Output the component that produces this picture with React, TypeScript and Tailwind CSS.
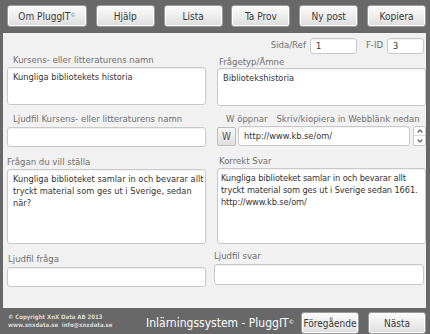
import { ChevronDown, ChevronUp } from "lucide-react";

const font = "font-['DejaVu_Sans_Condensed','DejaVu_Sans',sans-serif]";

const topButtons = ["Hjälp", "Lista", "Ta Prov", "Ny post", "Kopiera"];

function BarButton({ children, className = "" }: { children: React.ReactNode; className?: string }) {
  return (
    <button
      type="button"
      className={`flex h-[22px] items-center justify-center rounded-[3px] border border-[#9a9a9a] bg-[linear-gradient(180deg,#fbfbfb_0%,#ececec_55%,#dcdcdc_100%)] text-[10px] text-[#3a3a3a] shadow-[inset_0_0_0_1px_#ffffff] ${className}`}
    >
      {children}
    </button>
  );
}

function Label({ children, className = "" }: { children: React.ReactNode; className?: string }) {
  return <p className={`whitespace-nowrap text-[9.5px] leading-[12px] text-[#707070] ${className}`}>{children}</p>;
}

function Box({ className = "", children }: { className?: string; children?: React.ReactNode }) {
  return (
    <div
      className={`rounded-[3px] border border-[#c9c9c9] bg-white pl-[5px] pr-[1px] text-[9.2px] leading-[12px] text-[#333] shadow-[inset_0_1px_1px_rgba(0,0,0,0.06)] ${className}`}
    >
      {children}
    </div>
  );
}

export default function App() {
  return (
    <div className={`flex h-[334px] w-[430px] flex-col overflow-hidden bg-[#686868] ${font}`}>
      <div className="flex h-[33px] shrink-0 items-start justify-between pl-[7px] pr-[4px] pt-[5px]">
        <BarButton className="w-[80px]">
          <span>
            Om PluggIT<sup className="text-[6px] text-[#5b7fa8]">©</sup>
          </span>
        </BarButton>
        {topButtons.map((b) => (
          <BarButton key={b} className="w-[59px]">
            {b}
          </BarButton>
        ))}
      </div>

      <div className="ml-[3px] mr-[4px] flex-1 bg-[#f1f1f1] pl-[4px] pr-[1px]">
        <div className="flex h-[21px] items-end justify-end gap-[4px] pr-[1px]">
          <span className="pb-[2px] text-[9.5px] text-[#707070]">Sida/Ref</span>
          <Box className="h-[16px] w-[47px] !leading-[14px]">1</Box>
          <span className="ml-[5px] pb-[2px] text-[9.5px] text-[#707070]">F-ID</span>
          <Box className="h-[16px] w-[37px] !leading-[14px]">3</Box>
        </div>

        <div className="grid grid-cols-[199px_209px] gap-x-[11px]">
          <div className="flex flex-col">
            <Label className="ml-[6px]">Kursens- eller litteraturens namn</Label>
            <Box className="mt-[1px] h-[38px] pt-[3px]">Kungliga bibliotekets historia</Box>
            <Label className="ml-[6px] mt-[8px]">Ljudfil Kursens- eller litteraturens namn</Label>
            <Box className="mt-[2px] h-[20px]" />
            <Label className="mt-[9px]">Frågan du vill ställa</Label>
            <Box className="mt-[1px] h-[75px] pt-[3px]">
              Kungliga biblioteket samlar in och bevarar allt tryckt material som ges ut i Sverige, sedan när?
            </Box>
            <Label className="ml-[1px] mt-[9px]">Ljudfil fråga</Label>
            <Box className="mt-[2px] h-[20px]" />
          </div>

          <div className="flex flex-col">
            <Label className="ml-[2px] mt-[2px]">Frågetyp/Ämne</Label>
            <Box className="h-[38px] pt-[3px]">Bibliotekshistoria</Box>
            <div className="ml-[9px] mt-[7px] flex gap-[9px]">
              <Label>W öppnar</Label>
              <Label>Skriv/kiopiera in Webblänk nedan</Label>
            </div>
            <div className="mt-[1px] flex items-start gap-[2px]">
              <button
                type="button"
                className="mt-[1px] flex h-[19px] w-[19px] items-center justify-center rounded-[2px] border border-[#bdbdbd] bg-[linear-gradient(180deg,#f6f6f6,#dedede)] text-[10px] text-[#555]"
              >
                W
              </button>
              <Box className="h-[20px] w-[172px] !leading-[18px]">http://www.kb.se/om/</Box>
              <div className="ml-[1px] flex h-[20px] w-[13px] flex-col overflow-hidden rounded-[2px] border border-[#c9c9c9] bg-white">
                <div className="flex h-1/2 items-center justify-center border-b border-[#dcdcdc]">
                  <ChevronUp size={8} strokeWidth={4} color="#666" />
                </div>
                <div className="flex h-1/2 items-center justify-center">
                  <ChevronDown size={8} strokeWidth={4} color="#666" />
                </div>
              </div>
            </div>
            <Label className="ml-[2px] mt-[9px]">Korrekt Svar</Label>
            <Box className="mt-[1px] h-[76px] !pl-[3px] !pr-0 pt-[3px] tracking-[-0.12px]">
              Kungliga biblioteket samlar in och bevarar allt tryckt material som ges ut i Sverige sedan 1661. http://www.kb.se/om/
            </Box>
            <Label className="-ml-[3px] mt-[6px]">Ljudfil svar</Label>
            <Box className="-ml-[3px] mt-[2px] h-[21px] w-[210px]" />
          </div>
        </div>
      </div>

      <div className="flex h-[26px] shrink-0 items-center pl-[8px] pr-[4px]">
        <div className="flex w-[138px] shrink-0 flex-col whitespace-nowrap text-[6px] font-bold leading-[8px] text-[#dadada]">
          <span>© Copyright XnX Data AB 2013</span>
          <span>www.xnxdata.se &nbsp;info@xnxdata.se</span>
        </div>
        <div className="flex-1 whitespace-nowrap pt-[4px] text-[12px] text-white">
          Inlärningssystem - PluggIT<sup className="text-[6px]">©</sup>
        </div>
        <div className="flex items-start gap-[9px] pt-[4px]">
          <BarButton className="w-[58px]">Föregående</BarButton>
          <BarButton className="w-[58px]">Nästa</BarButton>
        </div>
      </div>
    </div>
  );
}
